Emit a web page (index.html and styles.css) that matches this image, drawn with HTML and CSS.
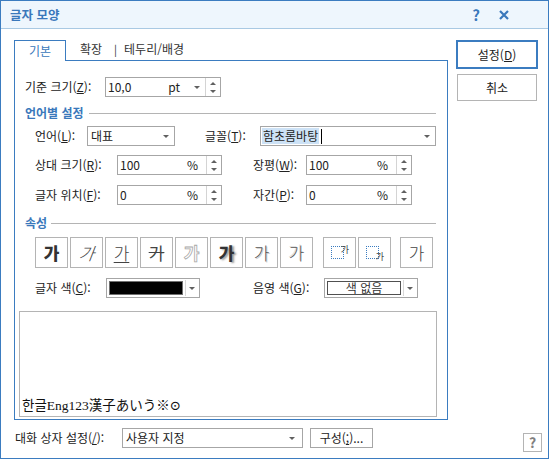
FILE: index.html
```html
<!DOCTYPE html>
<html lang="ko">
<head>
<meta charset="utf-8">
<title>글자 모양</title>
<link rel="stylesheet" href="styles.css">
</head>
<body>
<div class="win">
  <div class="titlebar">
    <span class="title">글자 모양</span>
    <div class="tb-btns">
      <span class="tb-help">?</span>
      <svg class="tb-close" width="10" height="10" viewBox="0 0 10 10"><path d="M1 1 L9 9 M9 1 L1 9" stroke="#3a78bb" stroke-width="2.2" fill="none"/></svg>
    </div>
  </div>
  <div class="body">
    <div class="main">
      <div class="tabs">
        <div class="tab active">기본</div>
        <div class="tab t2">확장</div>
        <div class="tab tsep">|</div>
        <div class="tab t3">테두리/배경</div>
      </div>
      <div class="panel">
        <div class="row r1">
          <span class="lbl l-base">기준 크기(<u>Z</u>):</span>
          <div class="field f-base">
            <span class="val">10,0</span><span class="unit u-pt">pt</span><span class="arrow a-pt"></span>
            <span class="spin"><i class="up"></i><i class="dn"></i></span>
          </div>
        </div>
        <div class="sec s1"><span class="sec-title">언어별 설정</span></div>
        <div class="row r-lang">
          <span class="lbl l-lang">언어(<u>L</u>):</span>
          <div class="combo c-lang"><span class="ctext">대표</span><span class="arrow"></span></div>
          <span class="lbl l-font">글꼴(<u>T</u>):</span>
          <div class="combo c-font"><span class="ctext"><span class="sel">함초롬바탕</span><span class="caret"></span></span><span class="arrow"></span></div>
        </div>
        <div class="row r-size">
          <span class="lbl l-a">상대 크기(<u>R</u>):</span>
          <div class="field f-a">
            <span class="val">100</span><span class="unit">%</span>
            <span class="spin"><i class="up"></i><i class="dn"></i></span>
          </div>
          <span class="lbl l-b">장평(<u>W</u>):</span>
          <div class="field f-b">
            <span class="val">100</span><span class="unit">%</span>
            <span class="spin"><i class="up"></i><i class="dn"></i></span>
          </div>
        </div>
        <div class="row r-pos">
          <span class="lbl l-a">글자 위치(<u>F</u>):</span>
          <div class="field f-a">
            <span class="val">0</span><span class="unit">%</span>
            <span class="spin"><i class="up"></i><i class="dn"></i></span>
          </div>
          <span class="lbl l-b">자간(<u>P</u>):</span>
          <div class="field f-b">
            <span class="val">0</span><span class="unit">%</span>
            <span class="spin"><i class="up"></i><i class="dn"></i></span>
          </div>
        </div>
        <div class="sec s2"><span class="sec-title">속성</span></div>
        <div class="attrs">
          <div class="ab"><span class="g g-bold">가</span></div>
          <div class="ab"><span class="g g-italic">가</span></div>
          <div class="ab"><span class="g g-under">가</span></div>
          <div class="ab"><span class="g g-strike">가</span></div>
          <div class="ab"><span class="g g-outline">가</span></div>
          <div class="ab"><span class="g g-shadow">가</span></div>
          <div class="ab"><span class="g g-emboss">가</span></div>
          <div class="ab"><span class="g g-engrave">가</span></div>
          <div class="ab ab-gap"><span class="dotbox"><span class="mini mini-sup">가</span></span></div>
          <div class="ab"><span class="dotbox"><span class="mini mini-sub">가</span></span></div>
          <div class="ab ab-gap2"><span class="g g-normal">가</span></div>
        </div>
        <div class="row r-color">
          <span class="lbl l-c">글자 색(<u>C</u>):</span>
          <div class="ccombo">
            <span class="swatch sw-black"></span><span class="csep"></span><span class="arrow"></span>
          </div>
          <span class="lbl l-g">음영 색(<u>G</u>):</span>
          <div class="ccombo">
            <span class="swatch sw-none">색 없음</span><span class="csep"></span><span class="arrow"></span>
          </div>
        </div>
        <div class="preview">
          <span class="ptext">한글Eng123漢子あいう※⊙</span>
        </div>
      </div>
      <div class="bottom-row">
        <span class="lbl l-dlg">대화 상자 설정(<u>/</u>):</span>
        <div class="combo c-dlg"><span class="ctext">사용자 지정</span><span class="arrow"></span></div>
        <div class="pbtn">구성(<u>;</u>)...</div>
      </div>
    </div>
    <div class="side">
      <div class="btn primary">설정(<u>D</u>)</div>
      <div class="btn cancel">취소</div>
      <div class="help">?</div>
    </div>
  </div>
</div>
</body>
</html>
```
FILE: styles.css
```css
* { box-sizing: border-box; }
html, body { margin: 0; padding: 0; }
body {
  font-family: "Noto Sans CJK KR", "Noto Sans", sans-serif;
  font-size: 12px;
  color: #222;
  background: #fff;
}
u { text-decoration: underline; text-underline-offset: 1px; }

.win {
  width: 549px;
  height: 459px;
  border: 1px solid #3b7cc0;
  display: flex;
  flex-direction: column;
  background: #fff;
}

.titlebar {
  height: 28px;
  flex: none;
  background: #eef6fd;
  border-bottom: 1px solid #a9c9e3;
  display: flex;
  align-items: center;
  padding-left: 9px;
}
.title {
  font-weight: bold;
  font-size: 12.5px;
  color: #3a78bb;
  line-height: 16px;
}
.tb-btns { margin-left: auto; display: flex; align-items: center; }
.tb-help {
  font-weight: bold;
  color: #3a78bb;
  font-size: 15px;
  line-height: 16px;
  margin-right: 19px;
}
.tb-close { margin-right: 39px; display: block; }

.body {
  flex: 1;
  display: flex;
  padding: 11px 0 6px 13px;
}
.main {
  width: 434px;
  flex: none;
  display: flex;
  flex-direction: column;
}
.side {
  flex: 1;
  margin-left: 8px;
  display: flex;
  flex-direction: column;
  align-items: flex-start;
}

/* tabs */
.tabs {
  display: flex;
  align-items: flex-end;
  height: 20px;
}
.tab {
  height: 20px;
  line-height: 18px;
  color: #333;
}
.tab.active {
  width: 52px;
  height: 21px;
  border: 1px solid #3b7cc0;
  border-bottom: none;
  background: #fff;
  margin-bottom: -1px;
  position: relative;
  z-index: 1;
  color: #3a78bb;
  text-align: center;
  line-height: 19px;
}
.t2 { margin-left: 14px; }
.tsep { margin-left: 12px; font-size: 11px; }
.t3 { margin-left: 7px; }

.panel {
  height: 360px;
  border: 1px solid #3b7cc0;
  display: flex;
  flex-direction: column;
}

.row {
  display: flex;
  align-items: center;
  height: 20px;
  flex: none;
}
.lbl { white-space: nowrap; line-height: 20px; }

.r1 { margin-top: 16px; padding-left: 10px; }
.l-base { width: 80px; }

.r-lang { margin-top: 6px; padding-left: 20px; }
.l-lang { width: 52px; }
.l-font { width: 55px; margin-left: 30px; }

.r-size { margin-top: 9px; padding-left: 20px; }
.r-pos { margin-top: 10px; padding-left: 20px; }
.l-a { width: 82px; }
.l-b { width: 53px; margin-left: 31px; }

.sec {
  display: flex;
  align-items: center;
  height: 14px;
  padding-left: 10px;
  padding-right: 11px;
  flex: none;
}
.sec::after {
  content: "";
  flex: 1;
  height: 1px;
  background: #b4b4b4;
  margin-left: 5px;
}
.sec-title {
  font-weight: bold;
  color: #3a78bb;
  line-height: 14px;
}
.s1 { margin-top: 9px; }
.s2 { margin-top: 11px; }
.s2::after { margin-left: 4px; }

/* fields with spinners */
.field {
  display: flex;
  align-items: center;
  height: 20px;
  border: 1px solid #a6a6a6;
  background: #fff;
  padding-left: 2px;
}
.f-base { width: 116px; }
.f-a { width: 105px; }
.f-b { width: 106px; }
.val { flex: 1; line-height: 18px; }
.unit { margin-right: 8px; line-height: 18px; }
.u-pt { margin-right: 14px; }
.a-pt { margin-right: 5px; }
.spin {
  width: 15px;
  height: 100%;
  border-left: 1px solid #d4d4d4;
  display: flex;
  flex-direction: column;
  align-items: center;
  justify-content: center;
  gap: 5px;
}
.up {
  width: 0; height: 0;
  border-left: 3px solid transparent;
  border-right: 3px solid transparent;
  border-bottom: 3px solid #606060;
}
.dn {
  width: 0; height: 0;
  border-left: 3px solid transparent;
  border-right: 3px solid transparent;
  border-top: 3px solid #606060;
}
.arrow {
  width: 0; height: 0;
  border-left: 3px solid transparent;
  border-right: 3px solid transparent;
  border-top: 3px solid #606060;
  flex: none;
}

/* combos */
.combo {
  display: flex;
  align-items: center;
  height: 20px;
  border: 1px solid #a6a6a6;
  background: #fff;
  padding: 0 5px 0 3px;
}
.ctext { flex: 1; display: flex; align-items: center; line-height: 18px; }
.c-lang { width: 88px; }
.c-font { width: 176px; padding-left: 1px; }
.sel { background: #cde2f6; padding: 0 1px; line-height: 16px; }
.caret { width: 1px; height: 15px; background: #000; margin-left: 2px; }

/* attribute buttons */
.attrs {
  display: flex;
  margin-top: 7px;
  padding-left: 20px;
  height: 31px;
  flex: none;
}
.ab {
  width: 33px;
  height: 31px;
  border: 1px solid #b4b4b4;
  margin-right: 2px;
  display: flex;
  align-items: center;
  justify-content: center;
  background: #fff;
}
.ab-gap { margin-left: 8px; }
.ab-gap2 { margin-left: 7px; }
.g { font-size: 17px; line-height: 20px; color: #444; }
.g-bold { font-weight: 900; color: #333; }
.g-italic { font-style: italic; transform: skewX(-8deg); font-weight: 300; display: inline-block; }
.g-under { text-decoration: underline; text-underline-offset: 2px; font-weight: 300; }
.g-strike { text-decoration: line-through; font-weight: 400; }
.g-outline { color: #fff; -webkit-text-stroke: 0.8px #a8a8a8; font-weight: 700; }
.g-shadow { font-weight: 900; color: #333; text-shadow: 2px 1px 2px #999; }
.g-emboss { font-weight: 300; color: #555; text-shadow: 1px 1px 0 #ccc; }
.g-engrave { font-weight: 300; color: #555; text-shadow: -1px -1px 0 #ddd; }
.g-normal { font-weight: 300; color: #444; }
.dotbox {
  width: 13px;
  height: 13px;
  border: 1px dotted #3b7cc0;
  position: relative;
  margin-right: 4px;
}
.mini {
  position: absolute;
  font-size: 9px;
  line-height: 9px;
  color: #444;
  right: -6px;
}
.mini-sup { top: -2px; }
.mini-sub { bottom: -3px; }

/* color combos */
.r-color { margin-top: 10px; padding-left: 20px; }
.l-c { width: 71px; }
.l-g { width: 71px; margin-left: 53px; }
.ccombo {
  width: 94px;
  height: 20px;
  border: 1px solid #a6a6a6;
  display: flex;
  align-items: center;
  padding: 0 4px 0 2px;
  background: #fff;
}
.swatch {
  flex: 1;
  height: 14px;
  border: 1px solid #707070;
}
.sw-black { background: #000; }
.sw-none {
  border-color: #505050;
  text-align: center;
  line-height: 12px;
  font-size: 12px;
  color: #333;
}
.csep { width: 1px; height: 16px; background: #d8d8d8; margin: 0 3px 0 2px; }

/* preview */
.preview {
  margin: 13px 0 0 4px;
  width: 418px;
  height: 106px;
  border: 1px solid #b4b4b4;
  display: flex;
  align-items: flex-end;
  padding: 0 0 2px 2px;
  flex: none;
}
.ptext {
  font-family: "Liberation Serif", "DejaVu Serif", "Noto Sans CJK KR", "Noto Sans CJK JP", serif;
  font-size: 13.5px;
  line-height: 16px;
  color: #111;
}

/* bottom */
.bottom-row {
  display: flex;
  align-items: center;
  margin-top: 8px;
  padding-left: 1px;
  height: 20px;
}
.l-dlg { width: 107px; }
.c-dlg { width: 181px; padding-left: 3px; padding-right: 7px; }
.pbtn {
  width: 63px;
  height: 20px;
  border: 1px solid #a6a6a6;
  margin-left: 7px;
  text-align: center;
  line-height: 18px;
  background: #fff;
}

/* side buttons */
.btn {
  text-align: center;
  background: #fff;
}
.primary {
  width: 82px;
  height: 29px;
  border: 2px solid #3b7cc0;
  line-height: 25px;
}
.cancel {
  width: 80px;
  height: 27px;
  margin-top: 5px;
  margin-left: 1px;
  border: 1px solid #b4b4b4;
  line-height: 25px;
}
.help {
  margin-top: auto;
  align-self: flex-end;
  margin-right: 6px;
  width: 19px;
  height: 19px;
  border: 1px solid #b4b4b4;
  color: #808080;
  font-weight: bold;
  font-size: 14px;
  line-height: 17px;
  text-align: center;
}
```
